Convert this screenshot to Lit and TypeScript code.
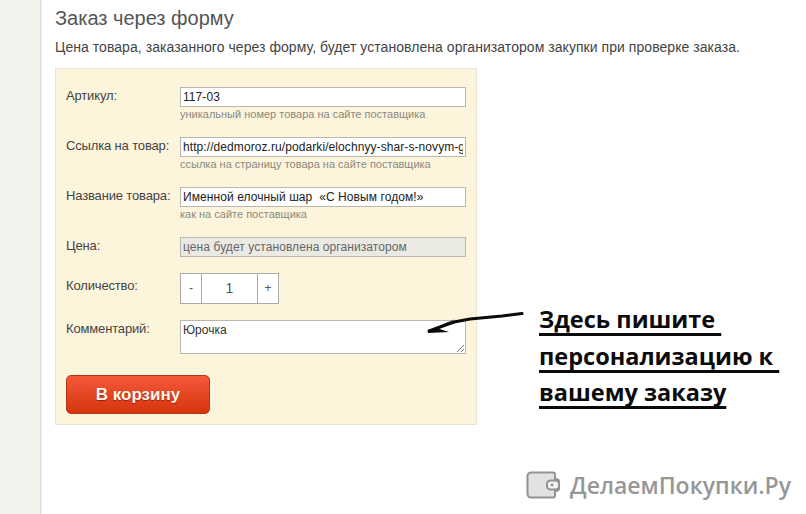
import { LitElement, html, css } from "lit";
import { customElement } from "lit/decorators.js";

@customElement("app-root")
export class AppRoot extends LitElement {
  static styles = css`
    :host { display: block; width: 806px; height: 514px; position: relative; overflow: hidden; background: #fff; font-family: "Liberation Sans", Arial, sans-serif; }
    .page { display: flex; height: 514px; }
    .side { width: 40px; background: #f3f1ec; border-right: 1px solid #dcdad5; box-shadow: 1px 0 2px rgba(0,0,0,.06); flex: none; }
    .main { padding: 0 0 0 14px; width: 422px; }
    h2 { margin: 8px 0 0; font-size: 20px; line-height: 21px; font-weight: 400; color: #555; }
    .lead { margin: 9px 0 0; font-size: 14px; line-height: 18px; color: #444; white-space: nowrap; letter-spacing: .05px; }
    .panel { box-sizing: border-box; margin-top: 12px; width: 422px; height: 357px; background: #fdf4dc; border: 1px solid #e8e4d6; padding: 18px 10px 0; }
    .row { display: flex; }
    .label { width: 114px; flex: none; font-size: 13px; line-height: 18px; color: #444; white-space: nowrap; letter-spacing: -.15px; }
    .hinted { height: 50px; }
    .price { height: 36px; }
    .qty-row { height: 47px; }
    .qty-row .label { padding-top: 4px; }
    .comment-row { height: 55px; }
    .field { box-sizing: border-box; width: 286px; height: 20px; border: 1px solid #b8b8b0; background: #fff; font-size: 12px; line-height: 18px; padding: 0 2px; color: #222; letter-spacing: .08px; }
    .field span { display: block; overflow: hidden; white-space: pre; }
    .disabled { background: #ebeae2; color: #666; }
    .hint { font-size: 11px; line-height: 14px; color: #8b8a7f; white-space: nowrap; }
    .qty { display: flex; box-sizing: border-box; width: 99px; height: 31px; border: 1px solid #aaa; background: #fff; font-size: 12px; line-height: 29px; color: #555; text-align: center; }
    .qty span { width: 20px; }
    .qty .n { flex: 1; border: solid #aaa; border-width: 0 1px; font-size: 14px; }
    .comment { box-sizing: border-box; position: relative; width: 286px; height: 34px; border: 1px solid #b8b8b0; background: #fff; font-size: 12px; line-height: 14px; padding: 2px; color: #333; }
    .grip { position: absolute; right: 0; bottom: 0; width: 9px; height: 9px; }
    .buy { box-sizing: border-box; width: 144px; height: 39px; border: 1px solid #b5360f; border-radius: 5px; background: linear-gradient(#f4593a, #d5350e); color: #fff6ea; font-size: 17px; font-weight: 700; line-height: 35px; font-family: "Liberation Sans", Arial, sans-serif; text-align: center; text-shadow: 0 1px 1px rgba(90,20,0,.6); padding: 0; display: block; }
    .arrow { position: absolute; left: 424px; top: 308px; }
    .note { position: absolute; left: 539px; top: 301px; font-family: "Open Sans", sans-serif; font-weight: 700; font-size: 23.5px; line-height: 36.5px; color: #0b0b0b; text-decoration: underline; text-decoration-thickness: 3px; text-underline-offset: 5px; text-decoration-skip-ink: none; white-space: pre; }
    .logo { position: absolute; left: 526px; top: 471px; display: flex; align-items: center; gap: 10px; color: #979797; font-family: "Open Sans", sans-serif; font-weight: 600; font-size: 23px; line-height: 28px; white-space: nowrap; }
  `;

  render() {
    return html`
      <div class="page">
        <div class="side"></div>
        <div class="main">
          <h2>Заказ через форму</h2>
          <p class="lead">Цена товара, заказанного через форму, будет установлена организатором закупки при проверке заказа.</p>
          <div class="panel">
            <div class="row hinted"><div class="label">Артикул:</div><div><div class="field"><span>117-03</span></div><div class="hint">уникальный номер товара на сайте поставщика</div></div></div>
            <div class="row hinted"><div class="label">Ссылка на товар:</div><div><div class="field"><span>http://dedmoroz.ru/podarki/elochnyy-shar-s-novym-godom</span></div><div class="hint">ссылка на страницу товара на сайте поставщика</div></div></div>
            <div class="row hinted"><div class="label">Название товара:</div><div><div class="field"><span>Именной елочный шар  «С Новым годом!»</span></div><div class="hint">как на сайте поставщика</div></div></div>
            <div class="row price"><div class="label">Цена:</div><div class="field disabled"><span>цена будет установлена организатором</span></div></div>
            <div class="row qty-row"><div class="label">Количество:</div><div class="qty"><span>-</span><span class="n">1</span><span>+</span></div></div>
            <div class="row comment-row"><div class="label">Комментарий:</div><div class="comment">Юрочка<svg class="grip" viewBox="0 0 9 9"><path d="M8 1 1 8M8 5 5 8" stroke="#777" stroke-width="1" fill="none"/></svg></div></div>
            <button class="buy">В корзину</button>
          </div>
        </div>
      </div>
      <svg class="arrow" width="102" height="28" viewBox="0 0 102 28">
        <path d="M98 5.500 78 8 62 9.500 46 11 30 14 5 23" fill="none" stroke="#0a0a0a" stroke-width="3" stroke-linecap="round" stroke-linejoin="round"/>
        <path d="M31 11 4 23 4 25 25 24 14 20.500Z" fill="#0a0a0a"/>
      </svg>
      <div class="note">Здесь пишите 
персонализацию к 
вашему заказу</div>
      <div class="logo">
        <svg width="34" height="28" viewBox="0 0 34 28">
          <path d="M5 1.500h22a2 2 0 0 1 2 2V8h1a3 3 0 0 1 3 3v6a3 3 0 0 1-3 3h-1v4.500a2 2 0 0 1-2 2H5a3.500 3.500 0 0 1-3.500-3.500V5A3.500 3.500 0 0 1 5 1.500Z" fill="#e2e2e2" stroke="#929292" stroke-width="2"/>
          <rect x="21" y="9.500" width="12" height="9" rx="3.500" fill="#f2f2f2" stroke="#929292" stroke-width="2"/>
          <circle cx="26" cy="14" r="1.400" fill="#929292"/>
        </svg>
        <span>ДелаемПокупки.Ру</span>
      </div>
    `;
  }
}
